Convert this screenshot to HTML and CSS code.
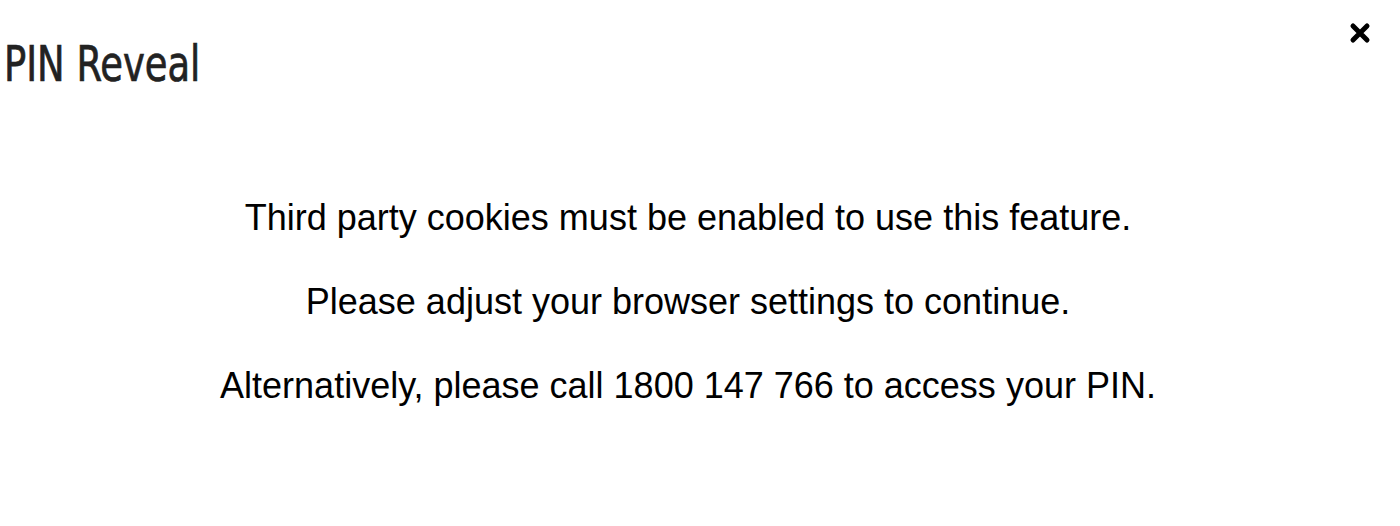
FILE: index.html
```html
<!DOCTYPE html>
<html>
<head>
<meta charset="utf-8">
<link rel="stylesheet" href="styles.css">
</head>
<body>
<div class="modal">
  <header class="modal-header">
    <h1 class="modal-title">PIN Reveal</h1>
    <button class="close-btn" aria-label="Close">
      <svg width="22" height="22" viewBox="0 0 22 22"><path d="M4 4 L18 18 M18 4 L4 18" stroke="#000" stroke-width="5" stroke-linecap="round"/></svg>
    </button>
  </header>
  <div class="modal-body">
    <p>Third party cookies must be enabled to use this feature.</p>
    <p>Please adjust your browser settings to continue.</p>
    <p>Alternatively, please call 1800 147 766 to access your PIN.</p>
  </div>
</div>
</body>
</html>
```
FILE: styles.css
```css
html, body { margin: 0; padding: 0; background: #fff; }
.modal { width: 1376px; }
.modal-header { display: flex; justify-content: space-between; align-items: flex-start; padding: 0 6px 0 4px; }
.modal-title {
  margin: 36px 0 0 0;
  font-family: "DejaVu Sans Condensed", "DejaVu Sans", sans-serif;
  font-stretch: condensed;
  font-weight: normal;
  font-size: 50px;
  letter-spacing: 0;
  line-height: 56px;
  color: #222;
  transform: scaleX(0.82);
  transform-origin: left center;
  -webkit-text-stroke: 0.7px #222;
}
.close-btn { background: none; border: 0; padding: 0; margin: 22px -1px 0 0; width: 22px; height: 22px; }
.modal-body { padding-top: 105px; text-align: center; font-family: "Liberation Sans", Arial, sans-serif; font-size: 36px; color: #000; }
.modal-body p { margin: 0 0 42px; line-height: 42px; }
```
